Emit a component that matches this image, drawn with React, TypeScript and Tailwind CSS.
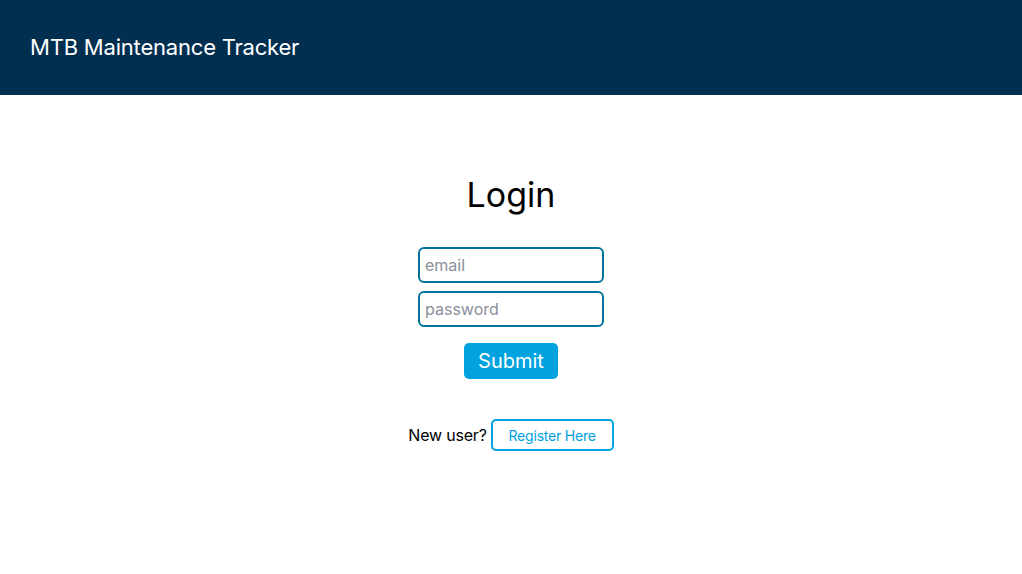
import React, { useState } from 'react';

function App() {
  const [email, setEmail] = useState('');
  const [password, setPassword] = useState('');

  return (
    <div className="min-h-screen bg-white font-['Inter',sans-serif] text-black">
      {/* Header */}
      <header className="h-[95px] bg-[#002f4f] flex items-center px-[30px]">
        <h1 className="text-[22px] text-white tracking-[-0.2px]">MTB Maintenance Tracker</h1>
      </header>

      {/* Login form */}
      <main className="flex flex-col items-center pt-[80px]">
        <h2 className="text-[34px] leading-[40px] mb-[32px]">Login</h2>
        <form className="flex flex-col items-center gap-[8px]" onSubmit={(e) => e.preventDefault()}>
          <input
            type="email"
            placeholder="email"
            value={email}
            onChange={(e) => setEmail(e.target.value)}
            className="w-[186px] h-[36px] px-[5px] text-[16px] border-2 border-[#00739b] rounded-[6px] outline-none placeholder:text-[#8a8f9c]"
          />
          <input
            type="password"
            placeholder="password"
            value={password}
            onChange={(e) => setPassword(e.target.value)}
            className="w-[186px] h-[36px] px-[5px] text-[16px] border-2 border-[#00739b] rounded-[6px] outline-none placeholder:text-[#8a8f9c]"
          />
          <button
            type="submit"
            className="mt-[8px] w-[94px] h-[36px] bg-[#00a2e0] text-white text-[20px] rounded-[5px]"
          >
            Submit
          </button>
        </form>

        <div className="flex items-center gap-[4px] mt-[40px]">
          <span className="text-[16px] tracking-[-0.2px]">New user?</span>
          <button className="w-[123px] h-[32px] border-2 border-[#00a2e0] text-[#00a2e0] text-[14px] tracking-[-0.2px] rounded-[5px] bg-white">
            Register Here
          </button>
        </div>
      </main>
    </div>
  );
}

export default App;
